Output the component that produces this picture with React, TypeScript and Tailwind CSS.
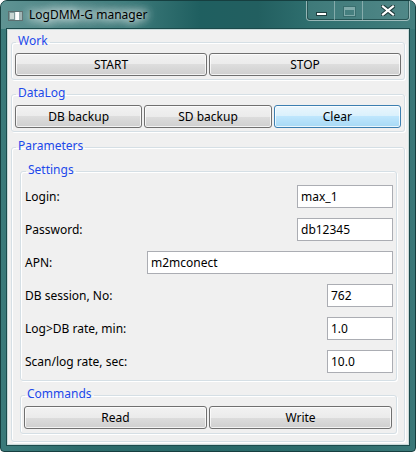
import type { ReactNode } from 'react'

const FONT = "[font-family:'Noto_Sans','Open_Sans',sans-serif]"

function Group({ title, className = '', children }: { title: string; className?: string; children: ReactNode }) {
  return (
    <fieldset
      className={`rounded-[3px] border border-[#d5dfe5] shadow-[inset_1px_1px_0_#ffffff,1px_1px_0_#ffffff] ${className}`}
    >
      <legend className="ml-[1px] px-[2px] pb-[2px] text-[12px] leading-[14px] text-[#2148ea]">{title}</legend>
      {children}
    </fieldset>
  )
}

function Btn({ label, hot = false }: { label: string; hot?: boolean }) {
  return (
    <button
      className={`h-[23px] rounded-[3px] border text-[12px] leading-none text-black shadow-[inset_0_0_0_1px_rgba(255,255,255,0.75)] ${
        hot
          ? 'border-[#3c7fb1] bg-[linear-gradient(#eaf6fd_0%,#d9f0fc_50%,#bee6fd_50%,#a7d9f5_100%)]'
          : 'border-[#707070] bg-[linear-gradient(#f2f2f2_0%,#ebebeb_50%,#dddddd_50%,#cfcfcf_100%)]'
      }`}
    >
      {label}
    </button>
  )
}

function Field({ label, value, width }: { label: string; value: string; width: string }) {
  return (
    <div className="flex h-[23px] items-center justify-between">
      <span className="text-[12px] text-black">{label}</span>
      <div
        className={`flex h-[23px] items-center border border-[#abadb3] bg-white pl-[3px] text-[12px] text-black ${width}`}
      >
        {value}
      </div>
    </div>
  )
}

function TitleIcon() {
  return (
    <svg width="15" height="10" viewBox="0 0 15 10">
      <rect x="0.5" y="0.5" width="14" height="9" fill="#e8eeee" stroke="#5c6f70" />
      <rect x="1" y="1" width="6" height="8" fill="#7f9a9a" />
      <rect x="2" y="2" width="4" height="6" fill="#c9d6d3" />
      <rect x="8" y="1" width="6" height="8" fill="#ffffff" />
      <rect x="11" y="1" width="3" height="8" fill="#9fb4b4" />
    </svg>
  )
}

function CaptionButtons() {
  return (
    <div className="mr-[5px] ml-auto flex h-[20px] rounded-b-[4px] border border-t-0 border-[rgba(255,255,255,0.45)] bg-[rgba(255,255,255,0.08)] shadow-[inset_0_-1px_0_rgba(10,45,45,0.55),inset_1px_0_0_rgba(10,45,45,0.45),inset_-1px_0_0_rgba(10,45,45,0.45)]">
      <div className="flex w-[27px] items-end justify-center pb-[4px] pl-[2px]">
        <div className="h-[4px] w-[11px] border border-[#1f3f40] bg-white" />
      </div>
      <div className="flex w-[28px] items-center justify-center border-l border-[rgba(255,255,255,0.35)] pt-[1px] pl-[2px]">
        <div className="h-[9px] w-[11px] border border-t-[3px] border-[rgba(200,225,225,0.45)] shadow-[0_0_0_1px_rgba(20,60,60,0.25)]" />
      </div>
      <div className="flex w-[47px] items-center justify-center border-l border-[rgba(255,255,255,0.35)] pl-[3px]">
        <svg width="14" height="11" viewBox="0 0 14 11">
          <path d="M2 1.5 L12 9.5 M12 1.5 L2 9.5" stroke="#203a3b" strokeWidth="4.2" strokeLinecap="square" />
          <path d="M2 1.5 L12 9.5 M12 1.5 L2 9.5" stroke="#ffffff" strokeWidth="2.2" strokeLinecap="square" />
        </svg>
      </div>
    </div>
  )
}

export default function App() {
  return (
    <div
      className={`${FONT} flex h-[452px] w-[416px] flex-col overflow-hidden rounded-t-[7px] rounded-b-[4px] border border-[#163f40] bg-[linear-gradient(90deg,#3a7a7a_0%,#2c6b6b_20%,#286868_50%,#2c6c6c_80%,#3a7878_100%)]`}
    >
      {/* title bar */}
      <div className="flex h-[28px] items-start bg-[linear-gradient(90deg,#5f9393_0%,#558c8c_8%,#3f7c7c_30%,#1f5f60_48%,#225f60_62%,#2f6f6f_75%,#437f7f_100%)]">
        <div className="mt-[10px] ml-[7px]">
          <TitleIcon />
        </div>
        <span className="mt-[6px] ml-[6px] text-[12px] leading-[16px] text-black [text-shadow:0_0_8px_#ffffff,0_0_10px_#ffffff,0_0_14px_rgba(255,255,255,0.9)]">
          LogDMM-G manager
        </span>
        <CaptionButtons />
      </div>

      {/* client area */}
      <div className="mx-[6px] mb-[6px] flex flex-1 flex-col border border-[#c9dada] bg-[#f0f0f0] shadow-[0_0_0_1px_#1b4a4b]">
        <Group title="Work" className="mx-[3px] mt-[4px] px-[3px] pt-[3px] pb-[3px]">
          <div className="grid grid-cols-2 gap-[2px]">
            <Btn label="START" />
            <Btn label="STOP" />
          </div>
        </Group>

        <Group title="DataLog" className="mx-[3px] mt-[6px] px-[3px] pt-[3px] pb-[3px]">
          <div className="grid grid-cols-3 gap-[2px]">
            <Btn label="DB backup" />
            <Btn label="SD backup" />
            <Btn label="Clear" hot />
          </div>
        </Group>

        <fieldset className="mx-[3px] mt-[7px] rounded-[3px] border border-[#d5dfe5] pb-[7px] shadow-[inset_1px_1px_0_#ffffff,1px_1px_0_#ffffff]">
          <legend className="ml-[4px] px-[2px] pb-[2px] text-[12px] leading-[14px] text-[#2148ea]">Parameters</legend>

          <Group title="Settings" className="mt-[8px] mr-[7px] ml-[8px] pt-[6px] pr-[3px] pb-[7px] pl-[4px]">
            <div className="flex flex-col gap-[10px]">
              <Field label="Login:" value="max_1" width="w-[96px]" />
              <Field label="Password:" value="db12345" width="w-[96px]" />
              <Field label="APN:" value="m2mconect" width="w-[246px]" />
              <Field label="DB session, No:" value="762" width="w-[66px]" />
              <Field label="Log>DB rate, min:" value="1.0" width="w-[66px]" />
              <Field label="Scan/log rate, sec:" value="10.0" width="w-[66px]" />
            </div>
          </Group>

          <Group title="Commands" className="mt-[6px] mr-[7px] ml-[8px] pt-[3px] pr-[4px] pb-[4px] pl-[3px]">
            <div className="grid grid-cols-2 gap-[2px]">
              <Btn label="Read" />
              <Btn label="Write" />
            </div>
          </Group>
        </fieldset>
      </div>
    </div>
  )
}
